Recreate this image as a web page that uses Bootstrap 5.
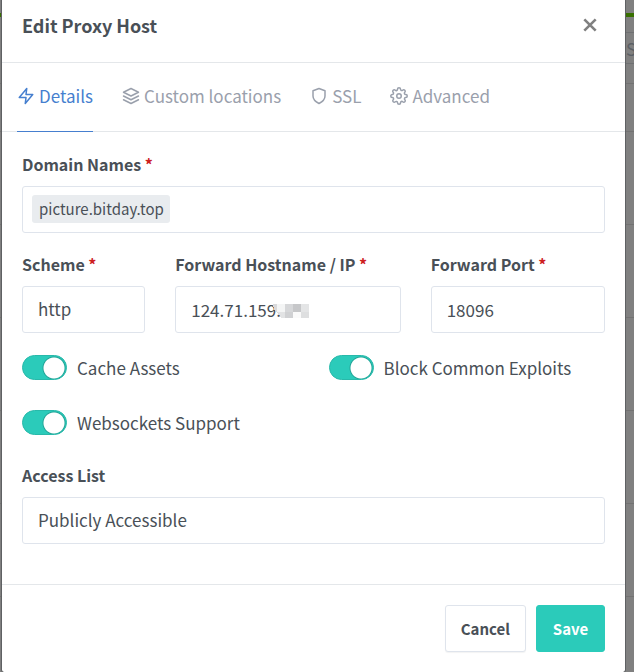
<!DOCTYPE html>
<html lang="en">
<head>
<meta charset="utf-8">
<meta name="viewport" content="width=device-width, initial-scale=1">
<title>Edit Proxy Host</title>
<link href="https://cdn.jsdelivr.net/npm/bootstrap@5.3.0/dist/css/bootstrap.min.css" rel="stylesheet">
<style>
  :root { --ink: #495057; --muted: #9aa0ac; --brand: #467fcf; --teal: #2bcbba; --line: #e4e7ea; --field: #dfe4ec; }
  body { background: #808080; color: var(--ink); font-family: "Noto Sans CJK SC", "Open Sans", sans-serif; font-size: 17px; line-height: 24px; overflow: hidden; }
  .backdrop-page { padding-top: 13px; color: #5a5d62; }
  .status-bar { height: 4px; background: #387000; }
  .search-strip { height: 66px; padding-top: 15px; }
  .search-box { width: 12px; height: 32px; border: solid #6f7072; border-width: 1px 0; background: transparent; color: #5c6066; padding: 0 0 0 4px; border-radius: 0; }
  .search-box::placeholder { color: #5c6066; }
  .line-short { height: 48px; border-top: 1px solid #727272; }
  .line-row { height: 93px; border-top: 1px solid #727272; }
  .dialog-layer { position: absolute; top: -12px; left: 0; right: 0; padding: 0 8px 0 1px; }
  .dialog-box { border: 1px solid #5f6163; border-radius: 3px; color: var(--ink); }
  .dialog-head { padding: 24px 27px 25px 20px; border-bottom: 1px solid var(--line); }
  .dialog-head h1 { font-size: 18px; line-height: 24px; font-weight: 700; }
  .close-x { width: 16px; height: 24px; color: #808080; }
  .tab-strip { padding: 0 15px; gap: 29px; border-bottom: 1px solid var(--line); }
  .tab-strip .nav-link { display: flex; align-items: center; gap: 4px; padding: 21px 0 23px; line-height: 24px; color: var(--muted); border-bottom: 1px solid transparent; margin-bottom: -1px; }
  .tab-strip .nav-link.active { color: var(--brand); border-color: var(--brand); }
  .tab-strip svg { width: 18px; height: 18px; fill: none; stroke: currentColor; stroke-width: 2; stroke-linecap: round; stroke-linejoin: round; }
  .dialog-body { padding: 20px 20px 40px; }
  .dialog-body .row { --bs-gutter-x: 30px; }
  .field-label { display: block; font-size: 16px; font-weight: 700; line-height: 24px; margin-bottom: 10px; white-space: nowrap; }
  .field-label span { color: #cd201f; }
  .field-group { margin-bottom: 19px; }
  .field-box { height: 47px; border: 1px solid var(--field); border-radius: 3px; padding: 0 15px 1px; font-size: 17px; line-height: 24px; color: var(--ink); }
  .tag-field { padding: 0 9px 1px; }
  .tag-chip { background: #e9ecef; border-radius: 3px; padding: 0 6px 0 7px; font-size: 15px; line-height: 28px; }
  .tag-entry { border: 0; outline: 0; min-width: 0; background: transparent; }
  .mosaic { position: absolute; left: 96px; top: 9px; width: 40px; height: 25px; }
  .toggle-row { display: flex; align-items: center; height: 29px; gap: 10px; margin: 0 0 26px; padding: 0; min-height: 0; }
  .toggle-row .form-check-input { width: 45px; height: 25px; margin: 0; float: none; flex: none; border: 1px solid #28b9aa; box-shadow: none; background: var(--teal) radial-gradient(circle at 31px 12px, #fff 10px, #22a598 11px, transparent 12px) no-repeat; }
  .toggles { padding-top: 1px; }
  .dialog-foot { padding: 20px; gap: 10px; border-top: 1px solid var(--line); }
  .dialog-btn { height: 47px; padding: 0 15px; border-radius: 3px; font-size: 15px; font-weight: 700; line-height: 24px; }
  .btn-cancel { border: 1px solid var(--field); color: var(--ink); background: #fff; box-shadow: 0 1px 1px rgba(0,0,0,.05); }
  .btn-save, .btn-save:hover { min-width: 69px; border: 1px solid var(--teal); color: #fff; background: var(--teal); }
</style>
</head>
<body>
<div class="backdrop-page">
  <div class="status-bar"></div>
  <div class="search-strip d-flex justify-content-end"><input class="search-box" type="text" placeholder="S" aria-label="Search"></div>
  <div class="line-short"></div>
  <div class="line-row"></div>
  <div class="line-row"></div>
  <div class="line-row"></div>
  <div class="line-row"></div>
  <div class="line-row"></div>
  <div class="line-row"></div>
</div>

<div class="dialog-layer">
  <form class="modal-content dialog-box bg-white" role="dialog" aria-labelledby="dialogTitle">
    <div class="dialog-head d-flex align-items-center justify-content-between">
      <h1 class="m-0" id="dialogTitle">Edit Proxy Host</h1>
      <button type="button" class="close-x btn p-0 border-0 d-flex align-items-center justify-content-center" aria-label="Close">
        <svg width="14" height="14" viewBox="0 0 14 14" fill="none" stroke="currentColor" stroke-width="2.6"><path d="M1.3 1.3l11.4 11.4M12.7 1.3L1.3 12.7"/></svg>
      </button>
    </div>
    <nav class="nav tab-strip flex-nowrap">
      <a class="nav-link active" href="#details" aria-current="page"><svg viewBox="0 0 24 24"><path d="M13 2L3 14h9l-1 8 10-12h-9l1-8z"/></svg>Details</a>
      <a class="nav-link" href="#locations"><svg viewBox="0 0 24 24"><path d="M12 2L2 7l10 5 10-5-10-5zM2 17l10 5 10-5M2 12l10 5 10-5"/></svg>Custom locations</a>
      <a class="nav-link" href="#ssl"><svg viewBox="0 0 24 24"><path d="M12 22s8-4 8-10V5l-8-3-8 3v7c0 6 8 10 8 10z"/></svg>SSL</a>
      <a class="nav-link" href="#advanced"><svg viewBox="0 0 24 24"><circle cx="12" cy="12" r="3"/><path d="M19.4 15a1.65 1.65 0 0 0 .33 1.82l.06.06a2 2 0 0 1 0 2.83 2 2 0 0 1-2.83 0l-.06-.06a1.65 1.65 0 0 0-1.82-.33 1.65 1.65 0 0 0-1 1.51V21a2 2 0 0 1-2 2 2 2 0 0 1-2-2v-.09A1.65 1.65 0 0 0 9 19.4a1.65 1.65 0 0 0-1.82.33l-.06.06a2 2 0 0 1-2.83 0 2 2 0 0 1 0-2.83l.06-.06a1.65 1.65 0 0 0 .33-1.82 1.65 1.65 0 0 0-1.51-1H3a2 2 0 0 1-2-2 2 2 0 0 1 2-2h.09A1.65 1.65 0 0 0 4.6 9a1.65 1.65 0 0 0-.33-1.82l-.06-.06a2 2 0 0 1 0-2.83 2 2 0 0 1 2.83 0l.06.06a1.65 1.65 0 0 0 1.82.33H9a1.65 1.65 0 0 0 1-1.51V3a2 2 0 0 1 2-2 2 2 0 0 1 2 2v.09a1.65 1.65 0 0 0 1 1.51 1.65 1.65 0 0 0 1.82-.33l.06-.06a2 2 0 0 1 2.83 0 2 2 0 0 1 0 2.83l-.06.06a1.65 1.65 0 0 0-.33 1.82V9a1.65 1.65 0 0 0 1.51 1H21a2 2 0 0 1 2 2 2 2 0 0 1-2 2h-.09a1.65 1.65 0 0 0-1.51 1z"/></svg>Advanced</a>
    </nav>
    <div class="dialog-body">
      <div class="field-group">
        <label class="field-label" for="domains">Domain Names <span>*</span></label>
        <div class="field-box tag-field d-flex align-items-center">
          <span class="tag-chip">picture.bitday.top</span>
          <input class="tag-entry flex-grow-1" id="domains" type="text">
        </div>
      </div>
      <div class="row field-group">
        <div class="col-3">
          <label class="field-label" for="scheme">Scheme <span>*</span></label>
          <select class="form-control field-box" id="scheme"><option>http</option><option>https</option></select>
        </div>
        <div class="col-5">
          <label class="field-label" for="host">Forward Hostname / IP <span>*</span></label>
          <div class="position-relative">
            <input class="form-control field-box" id="host" type="text" value="124.71.159.">
            <svg class="mosaic" viewBox="0 0 40 25" shape-rendering="crispEdges" aria-hidden="true">
              <path fill="#fff" d="M6 0h12v12H6z"/><path fill="#d9dadc" d="M2 9h4v6h3v4H7l-4-4z"/><path fill="#f4f5f5" d="M6 9h8v8H6z"/><path fill="#e2e3e4" d="M7 17h7v6H10z"/><path fill="#d6d7d9" d="M14 9h8v8h-8z"/><path fill="#c6c7c9" d="M22 9h8v8h-8z"/><path fill="#e4e5e6" d="M30 9h8v8h-8z"/><path fill="#d0d1d3" d="M14 17h8v6h-8z"/><path fill="#fafafa" d="M22 17h8v6h-8z"/><path fill="#dedfe0" d="M30 17h8v6h-8z"/>
            </svg>
          </div>
        </div>
        <div class="col-4">
          <label class="field-label" for="port">Forward Port <span>*</span></label>
          <input class="form-control field-box" id="port" type="text" value="18096">
        </div>
      </div>
      <div class="row toggles">
        <div class="col-6"><div class="form-check form-switch toggle-row"><input class="form-check-input" type="checkbox" role="switch" id="cache" checked><label for="cache">Cache Assets</label></div></div>
        <div class="col-6"><div class="form-check form-switch toggle-row"><input class="form-check-input" type="checkbox" role="switch" id="exploits" checked><label for="exploits">Block Common Exploits</label></div></div>
        <div class="col-6"><div class="form-check form-switch toggle-row"><input class="form-check-input" type="checkbox" role="switch" id="websockets" checked><label for="websockets">Websockets Support</label></div></div>
      </div>
      <label class="field-label" for="access">Access List</label>
      <select class="form-control field-box" id="access"><option>Publicly Accessible</option></select>
    </div>
    <div class="dialog-foot d-flex justify-content-end">
      <button type="button" class="btn dialog-btn btn-cancel">Cancel</button>
      <button type="submit" class="btn dialog-btn btn-save">Save</button>
    </div>
  </form>
</div>
<script src="https://cdn.jsdelivr.net/npm/bootstrap@5.3.0/dist/js/bootstrap.bundle.min.js"></script>
</body>
</html>
